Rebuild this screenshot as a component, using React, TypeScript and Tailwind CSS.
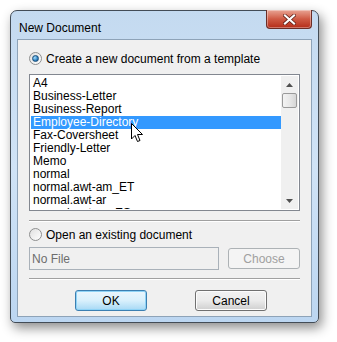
import React from "react";

const templates = [
  "A4",
  "Business-Letter",
  "Business-Report",
  "Employee-Directory",
  "Fax-Coversheet",
  "Friendly-Letter",
  "Memo",
  "normal",
  "normal.awt-am_ET",
  "normal.awt-ar",
  "normal.awt-az_ES",
];

function Radio({ checked }: { checked?: boolean }) {
  return (
    <span className="flex h-[13px] w-[13px] items-center justify-center rounded-full border border-[#8e8f8f] bg-gradient-to-br from-[#e0e0e0] to-[#ffffff]">
      {checked && (
        <span className="h-[7px] w-[7px] rounded-full border border-[#1b4f7a] bg-[radial-gradient(circle_at_35%_35%,#a7e0ff,#2c7fc0_60%,#17456e)]" />
      )}
    </span>
  );
}

function Cursor() {
  return (
    <svg className="pointer-events-none absolute left-[113px] top-[83px]" width="13" height="20" viewBox="0 0 13 20">
      <path d="M0.5 0.5 L0.5 16 L4 12.5 L6.5 18.5 L9 17.5 L6.5 11.5 L11.5 11.5 Z" fill="#ffffff" stroke="#000000" strokeWidth="1" strokeLinejoin="miter" />
    </svg>
  );
}

function Button({ children, focused, disabled, className }: { children: React.ReactNode; focused?: boolean; disabled?: boolean; className?: string }) {
  return (
    <button
      className={
        "flex items-center justify-center rounded-[3px] border text-[12px] " +
        (disabled
          ? "border-[#adb2b5] bg-[#f4f4f4] text-[#a0a0a0] "
          : focused
          ? "border-[#3c7fb1] bg-gradient-to-b from-[#eaf6fd] via-[#d9f0fc] to-[#a7d9f5] text-black shadow-[inset_0_0_0_1px_#8fd3f6] "
          : "border-[#707070] bg-gradient-to-b from-[#f2f2f2] via-[#ebebeb] to-[#cfcfcf] text-black shadow-[inset_0_0_0_1px_#fcfcfc] ") +
        (className ?? "")
      }
    >
      {children}
    </button>
  );
}

export default function App() {
  return (
    <div className="h-[342px] w-[337px] bg-white pl-[10px] pt-[10px] font-['Liberation_Sans',Arial,sans-serif]">
      <div className="flex h-[313px] w-[309px] flex-col rounded-t-[7px] rounded-b-[5px] border border-[#434c56] bg-gradient-to-b from-[#c4daf0] via-[#d0e3f6] to-[#bcd6f1] px-[6px] pb-[5px] shadow-[3px_5px_12px_rgba(0,0,0,0.45)]">
        {/* Title bar */}
        <div className="flex h-[28px] items-start justify-between">
          <span className="mt-[8px] pl-[2px] text-[12px] text-black">New Document</span>
          <div className="-mt-px flex h-[19px] w-[46px] items-center justify-center rounded-b-[4px] border border-t-0 border-[#6b2d26] bg-gradient-to-b from-[#e8a494] via-[#cf5a44] to-[#b42a16] shadow-[inset_0_0_0_1px_rgba(255,255,255,0.35)]">
            <svg width="13" height="11" viewBox="0 0 13 11">
              <path d="M2 1.5 L11 9.5 M11 1.5 L2 9.5" stroke="#5a1a12" strokeWidth="3.6" strokeLinecap="square" />
              <path d="M2 1.5 L11 9.5 M11 1.5 L2 9.5" stroke="#ffffff" strokeWidth="2.2" strokeLinecap="square" />
            </svg>
          </div>
        </div>

        {/* Client area */}
        <div className="relative flex flex-1 flex-col border border-[#8ea3b8] bg-[#f0f0f0] px-[11px] text-[12px] text-black">
          <div className="mt-[12px] flex h-[13px] items-center gap-[4px]">
            <Radio checked />
            <span>Create a new document from a template</span>
          </div>

          {/* List box */}
          <div className="mt-[9px] flex h-[137px] w-[271px] border border-[#828790] bg-white p-px">
            <div className="flex-1 overflow-hidden pt-px">
              {templates.map((t) => (
                <div
                  key={t}
                  className={
                    "h-[13px] pl-[2px] leading-[13px] " +
                    (t === "Employee-Directory" ? "bg-[#3399ff] text-white" : "")
                  }
                >
                  {t}
                </div>
              ))}
            </div>
            <div className="flex w-[17px] flex-col items-center bg-[#f0f0f0]">
              <div className="flex h-[17px] w-full items-center justify-center">
                <svg width="7" height="4" viewBox="0 0 7 4"><path d="M3.5 0 L7 4 L0 4 Z" fill="#505050" /></svg>
              </div>
              <div className="h-[15px] w-[15px] rounded-[2px] border border-[#9a9a9a] bg-gradient-to-r from-[#f3f3f3] via-[#e8e8e8] to-[#d6d6d6]" />
              <div className="flex-1" />
              <div className="flex h-[17px] w-full items-center justify-center">
                <svg width="7" height="4" viewBox="0 0 7 4"><path d="M0 0 L7 0 L3.5 4 Z" fill="#505050" /></svg>
              </div>
            </div>
          </div>

          <div className="mt-[9px] h-[2px] w-[271px] border-t border-b border-t-[#a0a0a0] border-b-white" />

          <div className="mt-[6px] flex h-[13px] items-center gap-[4px]">
            <Radio />
            <span>Open an existing document</span>
          </div>

          <div className="mt-[6px] flex h-[23px] w-[271px] items-start justify-between">
            <div className="flex h-[23px] w-[190px] items-center border border-[#a9b1b9] bg-[#f0f0f0] pl-[2px] text-[#6d6d6d]">No File</div>
            <Button disabled className="mt-px h-[21px] w-[72px]">Choose</Button>
          </div>

          <div className="mt-[8px] h-[2px] w-[271px] border-t border-b border-t-[#a0a0a0] border-b-white" />

          <div className="mt-[10px] flex h-[21px] w-[271px] gap-[48px] pl-[46px]">
            <Button focused className="h-[21px] w-[72px]">OK</Button>
            <Button className="h-[21px] w-[72px]">Cancel</Button>
          </div>

          <Cursor />
        </div>
      </div>
    </div>
  );
}
